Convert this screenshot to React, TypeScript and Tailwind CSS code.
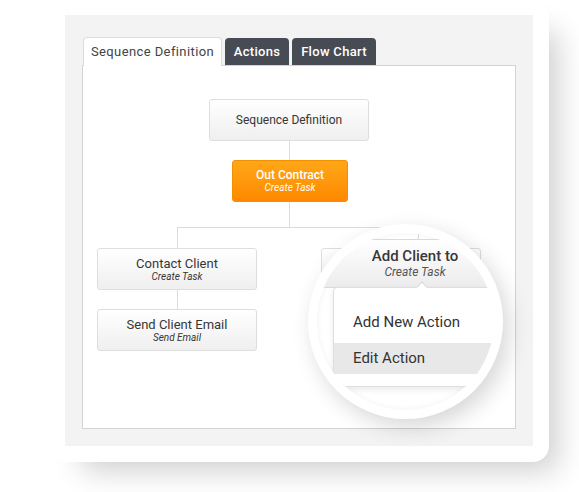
import React from "react";

const font = { fontFamily: "Roboto, 'Noto Sans', sans-serif" };

function Node({
  left,
  top,
  w,
  title,
  sub,
  orange,
  big,
}: {
  left: number;
  top: number;
  w: number;
  title?: string;
  sub?: string;
  orange?: boolean;
  big?: boolean;
}) {
  return (
    <div
      className={
        "absolute flex flex-col items-center justify-center rounded-[3px] border " +
        (orange
          ? "border-[#f39000] bg-gradient-to-b from-[#ffa716] to-[#ff8800] text-white"
          : "border-[#dedede] bg-gradient-to-b from-[#ffffff] to-[#efefef] text-[#363636]")
      }
      style={{ left, top, width: w, height: 42 }}
    >
      {title && (
        <div
          className={
            (big ? "text-[13px] leading-[15px] " : "text-[12px] leading-[14px] ") + (orange ? "font-medium" : "")
          }
        >
          {title}
        </div>
      )}
      {sub && <div className="text-[10px] italic leading-[12px]">{sub}</div>}
    </div>
  );
}

function VLine({ x, y1, y2 }: { x: number; y1: number; y2: number }) {
  return <div className="absolute w-px bg-[#dcdcdc]" style={{ left: x, top: y1, height: y2 - y1 }} />;
}
function HLine({ y, x1, x2 }: { y: number; x1: number; x2: number }) {
  return <div className="absolute h-px bg-[#dcdcdc]" style={{ top: y, left: x1, width: x2 - x1 }} />;
}

export default function App() {
  return (
    <div className="h-[492px] w-[579px] overflow-hidden bg-white" style={font}>
      <div className="ml-[50px] h-[462px] w-[499px] rounded-[16px] bg-white pl-[15px] pr-[16px] pt-[15px] pb-[16px] shadow-[20px_20px_30px_-12px_rgba(0,0,0,0.2)]">
        <div className="h-full bg-[#f3f3f3] pl-[17px] pr-[18px] pt-[22px]">
          <div className="flex items-end gap-[3px] pl-px">
            <div className="relative z-10 -mb-px flex h-[29px] w-[139px] items-center justify-center rounded-t-[4px] border border-b-0 border-[#dcdcdc] bg-white text-[13px] tracking-[0.4px] text-[#444]">
              Sequence Definition
            </div>
            <div className="flex h-[27px] w-[64px] items-center justify-center rounded-t-[4px] bg-[#474b54] text-[13px] font-medium tracking-[0.3px] text-white">
              Actions
            </div>
            <div className="flex h-[27px] w-[84px] items-center justify-center rounded-t-[4px] bg-[#474b54] text-[13px] font-medium tracking-[0.3px] text-white">
              Flow Chart
            </div>
          </div>
          <div className="relative h-[364px] w-[434px] border border-[#d3d3d3] bg-white">
            <VLine x={206} y1={75} y2={94} />
            <VLine x={206} y1={135} y2={161} />
            <HLine y={161} x1={94} x2={319} />
            <VLine x={94} y1={161} y2={182} />
            <VLine x={318} y1={161} y2={182} />
            <VLine x={94} y1={223} y2={243} />

            <Node left={126} top={33} w={160} title="Sequence Definition" />
            <Node left={149} top={94} w={116} title="Out Contract" sub="Create Task" orange />
            <Node left={14} top={182} w={160} title="Contact Client" sub="Create Task" big />
            <Node left={14} top={243} w={160} title="Send Client Email" sub="Send Email" big />
            <Node left={238} top={182} w={160} />

            {/* magnifier */}
            <div
              className="absolute h-[195px] w-[195px] rounded-full bg-white shadow-[6px_8px_22px_rgba(0,0,0,0.16)]"
              style={{ left: 225, top: 158 }}
            >
              <div className="absolute inset-[9px] overflow-hidden rounded-full bg-white shadow-[inset_0_0_6px_rgba(0,0,0,0.06)]">
                <div className="absolute w-px bg-[#d8d8d8]" style={{ left: 101, top: -5, height: 11 }} />
                <div
                  className="absolute flex flex-col items-center justify-center border border-[#dadada] bg-gradient-to-b from-[#ffffff] to-[#ececec]"
                  style={{ left: -2, top: 6, width: 200, height: 49 }}
                >
                  <div className="text-[15px] font-medium leading-[17px] text-[#383838]">Add Client to</div>
                  <div className="text-[12px] italic leading-[15px] text-[#555]">Create Task</div>
                </div>
                <div
                  className="absolute rounded-[4px] border border-[#dedede] bg-white shadow-[0_3px_6px_rgba(0,0,0,0.08)]"
                  style={{ left: 16, top: 54, width: 200, height: 100 }}
                >
                  <div className="absolute h-[8px] w-[8px] rotate-45 border-l border-t border-[#d6d6d6] bg-white" style={{ left: 84, top: -5 }} />
                  <div className="flex h-full flex-col pt-[18px]">
                    <div className="flex h-[32px] items-center pl-[19px] text-[15px] text-[#333]">Add New Action</div>
                    <div className="mt-[5px] flex h-[31px] items-center bg-[#e8e8e8] pl-[19px] text-[15px] text-[#333]">
                      Edit Action
                    </div>
                  </div>
                </div>
              </div>
            </div>
          </div>
        </div>
      </div>
    </div>
  );
}
